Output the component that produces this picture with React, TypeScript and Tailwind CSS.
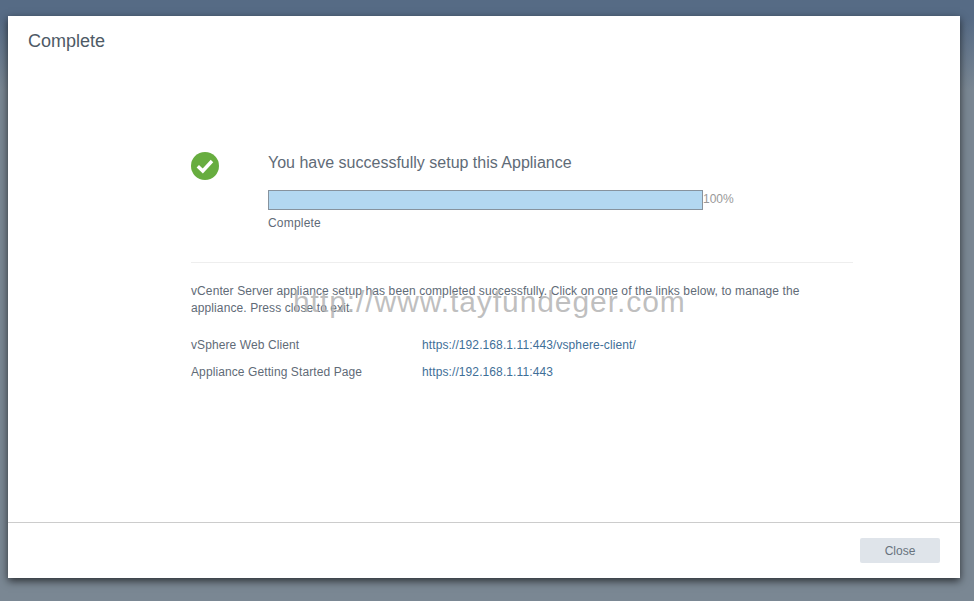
const font = { fontFamily: '"Liberation Sans", Arial, sans-serif' };

const links = [
  { label: 'vSphere Web Client', href: 'https://192.168.1.11:443/vsphere-client/' },
  { label: 'Appliance Getting Started Page', href: 'https://192.168.1.11:443' },
];

const App = () => {
  return (
    <div
      className="h-[601px] w-[974px] overflow-hidden bg-gradient-to-b from-[#566b85] from-[3%] to-[#7a8793] to-[15%] pl-2 pr-[14px] pt-4 font-['Liberation_Sans',Arial,sans-serif]"
    >
      <div className="relative flex h-[562px] w-[952px] flex-col bg-white shadow-[0_3px_8px_rgba(0,0,0,0.65)]">
        <div className="h-[506px] px-5 pt-[14px]">
          <h1 className="text-[18px] leading-[22px] text-[#4e5a66]">Complete</h1>

          <div className="ml-[163px] mt-[100px] w-[662px]">
            <div className="flex border-b border-[#eeeeee] pb-[31px]">
              <svg className="h-[28px] w-[28px] shrink-0" viewBox="0 0 28 28">
                <circle cx="14" cy="14" r="14" fill="#67ad3f" />
                <path d="M6.8 14.2l5 4.8 9.2-10" fill="none" stroke="#fff" strokeWidth="3.4" />
              </svg>
              <div className="ml-[49px] mt-[1px]">
                <p className="text-[16px] leading-[20px] text-[#5f6b77]">
                  You have successfully setup this Appliance
                </p>
                <div className="mt-[17px] flex items-center">
                  <div className="h-5 w-[435px] border border-[#87939e] bg-[#b3d8f1]" />
                  <span className="mb-[2px] text-[12px] leading-[16px] text-[#999999]">100%</span>
                </div>
                <p className="mt-[5px] text-[12px] leading-[16px] tracking-[0.2px] text-[#5f6b77]">Complete</p>
              </div>
            </div>

            <p className="mt-[20px] w-[620px] text-[12px] leading-[17px] tracking-[0.1px] text-[#5f6b77]">
              vCenter Server appliance setup has been completed successfully. Click on one of the links below, to manage the appliance. Press close to exit.
            </p>

            <div className="mt-[20px] flex flex-col gap-[11px]">
              {links.map((row) => (
                <div key={row.label} className="flex text-[12px] leading-[16px] tracking-[0.1px]">
                  <span className="w-[231px] text-[#5f6b77]">{row.label}</span>
                  <a href={row.href} className="text-[#3f6f98]">{row.href}</a>
                </div>
              ))}
            </div>
          </div>
        </div>

        <div className="flex h-[56px] items-start justify-end border-t border-[#cccccc] pr-5 pt-[15px]">
          <button className="h-[25px] w-[80px] rounded-[2px] bg-[#dfe4ea] text-[12px] text-[#68737e]">
            Close
          </button>
        </div>

        {/* watermark */}
        <div
          style={font}
          className="pointer-events-none absolute left-[285px] top-[268px] whitespace-nowrap text-[30px] leading-[36px] tracking-[0.93px] text-[#b4b4b4]/85"
        >
          http://www.tayfundeger.com
        </div>
      </div>
    </div>
  );
};

export default App;
